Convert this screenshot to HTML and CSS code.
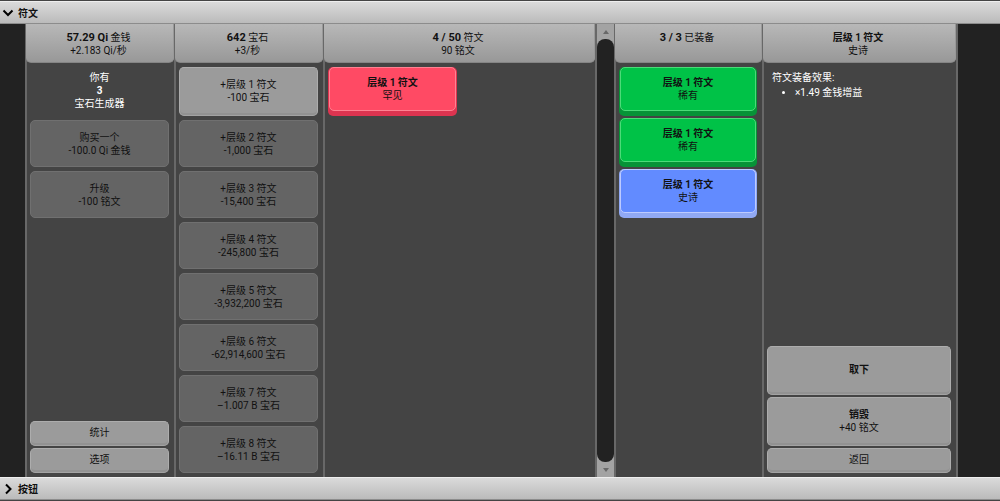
FILE: index.html
```html
<!DOCTYPE html>
<html lang="zh-CN">
<head>
<meta charset="utf-8">
<meta name="viewport" content="width=device-width, initial-scale=1">
<title>符文</title>
<link rel="stylesheet" href="styles.css">
</head>
<body>
<div class="app">
  <button class="bar" type="button" aria-expanded="true">
    <svg class="chevron" viewBox="0 0 12 12" aria-hidden="true"><path d="M1.500 3.500 L6 8 L10.500 3.500"/></svg>
    <span>符文</span>
  </button>

  <main class="stage">
    <section class="column money">
      <header class="head"><div><b>57.29 Qi</b> 金钱</div><div>+2.183 Qi/秒</div></header>
      <div class="body">
        <p class="owned">你有<br><b>3</b><br>宝石生成器</p>
        <button class="tile" type="button" disabled>购买一个<br>-100.0 Qi 金钱</button>
        <button class="tile" type="button" disabled>升级<br>-100 铭文</button>
        <button class="tile small push" type="button">统计</button>
        <button class="tile small" type="button">选项</button>
      </div>
    </section>

    <section class="column gems">
      <header class="head"><div><b>642</b> 宝石</div><div>+3/秒</div></header>
      <div class="body">
        <button class="tile" type="button">+层级 1 符文<br>-100 宝石</button>
        <button class="tile" type="button" disabled>+层级 2 符文<br>-1,000 宝石</button>
        <button class="tile" type="button" disabled>+层级 3 符文<br>-15,400 宝石</button>
        <button class="tile" type="button" disabled>+层级 4 符文<br>-245,800 宝石</button>
        <button class="tile" type="button" disabled>+层级 5 符文<br>-3,932,200 宝石</button>
        <button class="tile" type="button" disabled>+层级 6 符文<br>-62,914,600 宝石</button>
        <button class="tile" type="button" disabled>+层级 7 符文<br>–1.007 B 宝石</button>
        <button class="tile" type="button" disabled>+层级 8 符文<br>–16.11 B 宝石</button>
      </div>
    </section>

    <section class="column runes">
      <header class="head"><div><b>4 / 50</b> 符文</div><div>90 铭文</div></header>
      <div class="body inventory">
        <button class="rune red" type="button"><span class="face"><b>层级 1 符文</b><span>罕见</span></span></button>
      </div>
    </section>

    <div class="scroller">
      <button type="button" aria-label="向上滚动"><svg viewBox="0 0 8 6" aria-hidden="true"><path d="M1 5 L4 1 L7 5 Z"/></svg></button>
      <div class="track"></div>
      <button type="button" aria-label="向下滚动"><svg viewBox="0 0 8 6" aria-hidden="true"><path d="M1 1 L4 5 L7 1 Z"/></svg></button>
    </div>

    <section class="column equipped">
      <header class="head"><div><b>3 / 3</b> 已装备</div></header>
      <div class="body">
        <button class="rune green" type="button"><span class="face"><b>层级 1 符文</b><span>稀有</span></span></button>
        <button class="rune green" type="button"><span class="face"><b>层级 1 符文</b><span>稀有</span></span></button>
        <button class="rune blue" type="button"><span class="face"><b>层级 1 符文</b><span>史诗</span></span></button>
      </div>
    </section>

    <section class="column detail">
      <header class="head"><div><b>层级 1 符文</b></div><div>史诗</div></header>
      <div class="body">
        <div class="effects">
          <p>符文装备效果:</p>
          <ul><li>×1.49 金钱增益</li></ul>
        </div>
        <button class="tile push" type="button"><b>取下</b></button>
        <button class="tile" type="button"><b>销毁</b><br>+40 铭文</button>
        <button class="tile small" type="button">返回</button>
      </div>
    </section>
  </main>

  <button class="bar" type="button" aria-expanded="false">
    <svg class="chevron" viewBox="0 0 12 12" aria-hidden="true"><path d="M4 1.500 L8.500 6 L4 10.500"/></svg>
    <span>按钮</span>
  </button>
</div>
</body>
</html>
```
FILE: styles.css
```css
* {
  box-sizing: border-box;
}

body {
  margin: 0;
  background: #444;
  color: #111;
  font: 10px/13px Roboto, "Noto Sans CJK SC", sans-serif;
}

button {
  margin: 0;
  padding: 0;
  border: 0;
  color: inherit;
  font: inherit;
  cursor: pointer;
}

p,
ul {
  margin: 0;
}

.app {
  display: flex;
  flex-direction: column;
  min-height: 100vh;
  padding: 1px 0;
}

.bar {
  display: flex;
  align-items: center;
  gap: 4px;
  height: 23px;
  padding: 1px 2px 0;
  border-top: 1px solid #eee;
  border-bottom: 1px solid #8c8c8c;
  background: linear-gradient(#dadada, #bbb);
  font-weight: 700;
}

.chevron {
  width: 12px;
  height: 12px;
  fill: none;
  stroke: #000;
  stroke-width: 2;
}

.stage {
  display: flex;
  flex: 1;
  padding: 0 42px 0 25px;
  background: #222;
}

.column {
  display: flex;
  flex-direction: column;
  border-left: 2px solid #686868;
  background: #444;
}

.money,
.gems {
  flex: 0 0 149px;
}

.equipped {
  flex: 0 0 148px;
}

.runes {
  flex: 1;
  border-right: 2px solid #686868;
}

.detail {
  flex: 0 0 196px;
  border-right: 2px solid #686868;
}

.head {
  height: 39px;
  margin-left: -1px;
  padding: 7px 3px 0 0;
  border-bottom: 1px solid #858585;
  border-radius: 0 0 5px 5px;
  background: linear-gradient(#b8b8b8, #989898);
  box-shadow: inset -1px 0 #999;
  text-align: center;
}

.head b {
  font-size: 11px;
}

.detail .head b {
  font-size: 10px;
}

.head div {
  height: 13px;
}

.body {
  display: flex;
  flex: 1;
  flex-direction: column;
  gap: 2px;
  padding: 4px 5px 4px 3px;
}

.owned {
  height: 49px;
  padding-top: 4px;
  color: #fff;
  text-align: center;
}

.tile {
  height: 49px;
  padding-bottom: 2px;
  border: 1px solid #adadad;
  border-bottom-color: #a3a3a3;
  border-radius: 5px;
  background: #9b9b9b;
  box-shadow: inset 0 -2px #929292;
}

.tile:disabled {
  height: 47px;
  margin: 2px 0 0;
  padding: 0;
  border-color: #707070;
  background: #646464;
  box-shadow: none;
  cursor: default;
}

.small {
  height: 25px;
}

.push {
  margin-top: auto;
}

.inventory {
  flex-flow: row wrap;
  align-content: flex-start;
}

.inventory .rune {
  width: 129px;
}

.rune {
  height: 49px;
  padding: 0 1px 5px;
  border-radius: 5px;
}

.face {
  display: flex;
  flex-direction: column;
  align-items: center;
  justify-content: center;
  height: 44px;
  border: 1px solid;
  border-radius: 5px;
}

.red {
  background: #dd3450;
}

.red .face {
  border-color: #ff8292;
  background: #ff4a64;
}

.green {
  background: #079337;
}

.green .face {
  border-color: #4cdb78;
  background: #00c247;
}

.blue {
  background: #91a9f4;
}

.blue .face {
  border-color: #bdcbff;
  background: #628bff;
}

.scroller {
  display: flex;
  flex: 0 0 17px;
  flex-direction: column;
  background: #a3a3a3;
}

.scroller button {
  display: grid;
  height: 15px;
  place-items: center;
  background: none;
}

.scroller svg {
  width: 8px;
  height: 6px;
  fill: #686868;
}

.track {
  flex: 1;
  border-radius: 8px;
  background: #222;
}

.effects {
  padding: 4px 5px;
  color: #fff;
}

.effects ul {
  padding: 2px 0 0 23px;
}
```
